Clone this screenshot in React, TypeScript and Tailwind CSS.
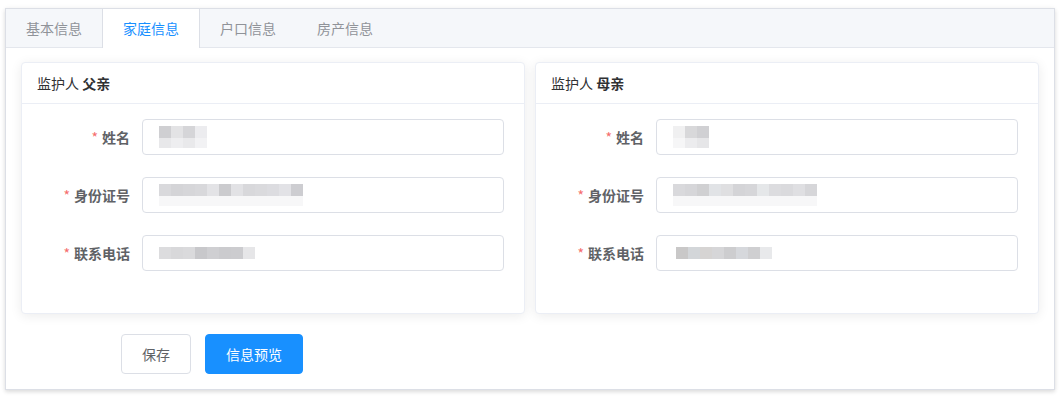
import React from "react";

type Px = { row1: string[]; row2?: string[]; offset?: number };

function Pixels({ row1, row2, offset = 0 }: Px) {
  return (
    <div className="flex flex-col" style={{ marginLeft: offset }}>
      <div className="flex">
        {row1.map((c, i) => (
          <div key={i} className="h-[12px] w-[12px]" style={{ background: c }} />
        ))}
      </div>
      {row2 && (
        <div className="flex">
          {row2.map((c, i) => (
            <div key={i} className="h-[10px] w-[12px]" style={{ background: c }} />
          ))}
        </div>
      )}
    </div>
  );
}

function Field({ label, px }: { label: string; px: Px }) {
  return (
    <div className="mb-[22px] flex items-center">
      <div className="w-[100px] shrink-0 pr-[12px] text-right text-[14px] font-semibold leading-[36px] text-[#606266]">
        <span className="mr-[4px] font-normal text-[#f56c6c]">*</span>
        {label}
      </div>
      <div className="flex h-[36px] flex-1 items-center rounded-[4px] border border-[#dcdfe6] bg-white pl-[16px]">
        <Pixels {...px} />
      </div>
    </div>
  );
}

function Card({ who, fields }: { who: string; fields: { label: string; px: Px }[] }) {
  return (
    <div className="rounded-[4px] border border-[#ebeef5] bg-white shadow-[0_2px_12px_0_rgba(0,0,0,0.08)]">
      <div className="border-b border-[#ebeef5] px-[15px] py-[10px] text-[14px] leading-[20px] text-[#303133]">
        监护人 <span className="font-semibold">{who}</span>
      </div>
      <div className="px-[20px] pb-[20px] pt-[15px]">
        {fields.map((f) => (
          <Field key={f.label} label={f.label} px={f.px} />
        ))}
      </div>
    </div>
  );
}

const light12 = Array(12).fill("#f7f7f8");

export default function App() {
  const tabs = ["基本信息", "家庭信息", "户口信息", "房产信息"];
  const father = [
    {
      label: "姓名",
      px: {
        row1: ["#cfcfd2", "#e3e3e5", "#d5d5d8", "#ececef"],
        row2: ["#e8e8ea", "#eeeef0", "#e9e9eb", "#f2f2f4"],
      },
    },
    {
      label: "身份证号",
      px: {
        row1: ["#d9d9dc", "#d4d4d7", "#d6d6d9", "#d8d8db", "#e3e3e6", "#cbcbce", "#e2e2e5", "#d8d8db", "#dadadd", "#dcdce0", "#e2e2e6", "#cdcdd1"],
        row2: light12,
      },
    },
    {
      label: "联系电话",
      px: { row1: ["#dcdcde", "#d8d8da", "#dadadc", "#c8c8cb", "#cfcfd2", "#cbcbce", "#cccccf", "#e6e6e8"] },
    },
  ];
  const mother = [
    {
      label: "姓名",
      px: {
        row1: ["#f0f0f1", "#d8d8da", "#d0d0d3"],
        row2: ["#f6f6f7", "#ececee", "#e6e6e8"],
        offset: 0,
      },
    },
    {
      label: "身份证号",
      px: {
        row1: ["#d9d9dc", "#d6d6d9", "#d0d0d2", "#e1e3e6", "#dfdfe1", "#d4d4d7", "#d6d6d9", "#e5e7e9", "#dcdcdf", "#dadadd", "#dfdfe2", "#d6d6d9"],
        row2: light12,
        offset: 0,
      },
    },
    {
      label: "联系电话",
      px: { row1: ["#c9c8c8", "#d3d6d9", "#d6d4d3", "#d6d6d8", "#cdcdcf", "#d6d8dc", "#cfcfd1", "#e8e9eb"], offset: 3 },
    },
  ];

  return (
    <div
      className="min-h-[401px] bg-white pl-[5px] pr-[6px] pt-[8px]"
      style={{ fontFamily: '"Noto Sans CJK SC", "Noto Sans", sans-serif' }}
    >
      <div className="border border-[#dcdfe6] bg-white shadow-[0_2px_4px_0_rgba(0,0,0,0.12),0_0_6px_0_rgba(0,0,0,0.04)]">
        <div className="flex h-[39px] border-b border-[#e4e7ed] bg-[#f5f7fa]">
          {tabs.map((t, i) => (
            <div
              key={t}
              className={
                i === 1
                  ? "-mb-px -ml-px flex h-[39px] items-center border-x border-[#dcdfe6] bg-white px-[20px] text-[14px] text-[#1890ff]"
                  : "-ml-px flex h-[38px] items-center border-x border-transparent px-[20px] text-[14px] text-[#909399]"
              }
            >
              {t}
            </div>
          ))}
        </div>
        <div className="px-[15px] pb-[15px] pt-[14px]">
          <div className="grid grid-cols-2 gap-[10px]">
            <Card who="父亲" fields={father} />
            <Card who="母亲" fields={mother} />
          </div>
          <div className="mt-[20px] flex gap-[14px] pl-[100px]">
            <button className="h-[40px] w-[70px] rounded-[4px] border border-[#dcdfe6] bg-white text-[14px] text-[#606266]">
              保存
            </button>
            <button className="h-[40px] w-[98px] rounded-[4px] border border-[#1890ff] bg-[#1890ff] text-[14px] text-white">
              信息预览
            </button>
          </div>
        </div>
      </div>
    </div>
  );
}
